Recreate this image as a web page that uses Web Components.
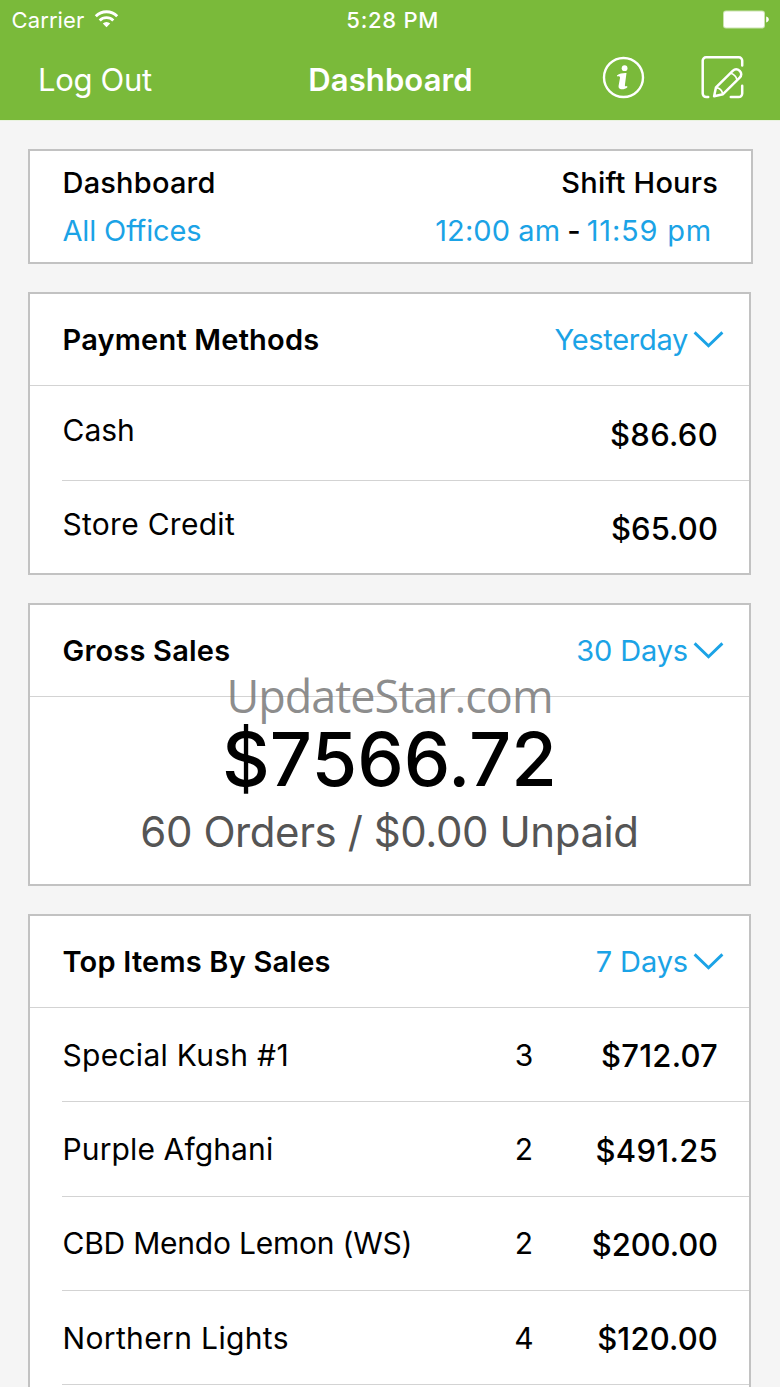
<!DOCTYPE html>
<html lang="en">
<head>
<meta charset="utf-8">
<title>Dashboard</title>
<style>
    html, body {
        margin: 0;
        height: 100%;
        overflow: hidden;
    }
    body {
        --green: #7aba3a;
        --blue: #1ba3e6;
        --border: #c2c2c2;
        --line: #d3d3d3;
        background: #f5f5f5;
        color: #000;
        font-family: Inter, "Liberation Sans", sans-serif;
    }
</style>
</head>
<body>
<dashboard-app></dashboard-app>

<script>
class StatusBar extends HTMLElement {
    constructor() {
        super();
        this.attachShadow({ mode: 'open' }).innerHTML = `
            <style>
                :host {
                    display: grid;
                    grid-template-columns: 1fr auto 1fr;
                    align-items: center;
                    height: 40px;
                    padding: 0 11px 0 11.5px;
                    font-size: 22px;
                    line-height: 40px;
                }
                .carrier { display: flex; align-items: center; gap: 9.5px; letter-spacing: 0.11px; }
                .time { font-weight: 500; letter-spacing: 0.72px; padding-left: 5px; }
                .battery { justify-self: end; margin-top: -2px; }
                svg { display: block; }
                .wifi { margin-top: -3px; }
            </style>
            <div class="carrier">
                <span>Carrier</span>
                <svg class="wifi" width="25" height="19" viewBox="0 0 25 19" fill="none" stroke="#fff" stroke-width="2.9">
                    <path d="M1.8 7.2a15.2 15.2 0 0 1 21.4 0"/>
                    <path d="M5.7 11.4a9.6 9.6 0 0 1 13.6 0"/>
                    <path d="M12.5 18.2l-3.7-3.7a5.3 5.3 0 0 1 7.4 0z" fill="#fff" stroke="none"/>
                </svg>
            </div>
            <span class="time">5:28 PM</span>
            <svg class="battery" width="46" height="19" viewBox="0 0 46 19">
                <rect x="0" y="0.5" width="42" height="18" rx="3" fill="#fff" fill-opacity="0.6"/>
                <rect x="1" y="1.5" width="40" height="16" rx="2" fill="#fff"/>
                <path d="M43.2 6.6c1.6.3 2.6 1.5 2.6 2.9s-1 2.6-2.6 2.9z" fill="#fff"/>
            </svg>
        `;
    }
}

class NavBar extends HTMLElement {
    constructor() {
        super();
        this.attachShadow({ mode: 'open' }).innerHTML = `
            <style>
                :host {
                    display: grid;
                    grid-template-columns: 1fr auto 1fr;
                    align-items: center;
                    height: 80px;
                    padding: 0 34.5px 0 38px;
                    box-sizing: border-box;
                    font-size: 31px;
                    line-height: 78px;
                }
                .back { letter-spacing: -0.31px; }
                .title { font-weight: 600; letter-spacing: 0.11px; padding-right: 2.5px; }
                .actions { display: flex; justify-content: flex-end; gap: 54.5px; margin-top: -5px; }
                svg { display: block; }
            </style>
            <span class="back">Log Out</span>
            <span class="title">Dashboard</span>
            <div class="actions">
                <svg width="43" height="43" viewBox="0 0 43 43">
                    <circle cx="21.5" cy="21.5" r="19.5" fill="none" stroke="#fff" stroke-width="2.4"/>
                    <circle cx="22.6" cy="12.2" r="2.9" fill="#fff"/>
                    <path d="M14.9 19.5c2.7-1.8 6-2.6 9.6-2.4l-1.6 12c-.2 1.3.7 1.5 2.2.8l.3 1.3c-1.9 1.7-4.3 2.4-6.4 2-1.9-.4-2.7-1.6-2.4-3.4l1.4-7.8c.2-1.4-.9-1.9-2.8-1.5z" fill="#fff"/>
                </svg>
                <svg width="46" height="43" viewBox="0 0 46 43" fill="none" stroke="#fff" stroke-width="2.5" stroke-linecap="round" stroke-linejoin="round">
                    <path d="M8.2 41.1H6.3a3.6 3.6 0 0 1-3.6-3.6V4.6a3.3 3.3 0 0 1 3.3-3.3h32.9a3.3 3.3 0 0 1 3.3 3.3v4.8"/>
                    <path d="M42.2 29.8v7.7a3.6 3.6 0 0 1-3.6 3.6h-7.8"/>
                    <path d="M14.1 40.2l1.9-8.9 16.7-16.4c2.1-2 4.9-2 7 0s2 4.9 0 6.8L23 38.2z"/>
                    <path d="M17.3 31.8c2.5.6 4.3 2.3 5.1 5M30.7 17.3c3.2.9 5.2 2.9 6.2 6.1" stroke-width="1.7"/>
                </svg>
            </div>
        `;
    }
}

class DashCard extends HTMLElement {
    constructor() {
        super();
        this.attachShadow({ mode: 'open' }).innerHTML = `
            <style>
                :host {
                    display: block;
                    box-sizing: border-box;
                    width: 723px;
                    background: #fff;
                    border: 2px solid var(--border);
                }
            </style>
            <slot></slot>
        `;
    }
}

class CardHead extends HTMLElement {
    constructor() {
        super();
        this.attachShadow({ mode: 'open' }).innerHTML = `
            <style>
                :host {
                    display: flex;
                    align-items: center;
                    justify-content: space-between;
                    box-sizing: border-box;
                    height: 92.2px;
                    padding: 0 25px 0 32.5px;
                    border-bottom: 1px solid var(--line);
                    font-size: 29px;
                }
                .title { font-weight: 600; letter-spacing: 0.2px; }
                .period {
                    display: flex;
                    align-items: center;
                    gap: 5px;
                    color: var(--blue);
                }
                svg { display: block; }
            </style>
            <span class="title"><slot></slot></span>
            <div class="period">
                <slot name="period"></slot>
                <svg width="31" height="18" viewBox="0 0 31 18" fill="none" stroke="currentColor" stroke-width="2.9">
                    <path d="M1.6 1.4L15.5 14.8L29.4 1.4"/>
                </svg>
            </div>
        `;
    }
}

class ListRow extends HTMLElement {
    constructor() {
        super();
        this.attachShadow({ mode: 'open' }).innerHTML = `
            <style>
                :host {
                    display: grid;
                    grid-template-columns: 1fr 40px 174px;
                    align-items: center;
                    box-sizing: border-box;
                    height: 94.3px;
                    margin-left: 32px;
                    padding-right: 31px;
                    border-bottom: 1px solid var(--line);
                    font-size: 30px;
                }
                :host([last]) { border-bottom: none; }
                .name { padding-left: 0.5px; white-space: nowrap; }
                :host([raised]) .name { padding-bottom: 6px; }
                .qty { text-align: center; }
                .amount { padding-top: 2px; text-align: right; font-size: 31px; font-weight: 500; }
            </style>
            <span class="name"><slot></slot></span>
            <span class="qty"><slot name="qty"></slot></span>
            <span class="amount"><slot name="amount"></slot></span>
        `;
    }
}

class ShiftInfo extends HTMLElement {
    constructor() {
        super();
        this.attachShadow({ mode: 'open' }).innerHTML = `
            <style>
                :host {
                    display: flex;
                    justify-content: space-between;
                    box-sizing: border-box;
                    height: 111px;
                    padding: 8px 33px 0 32.5px;
                    font-size: 29px;
                    line-height: 48px;
                }
                .label { font-weight: 500; letter-spacing: 0.2px; }
                .right { text-align: right; }
                .link { color: var(--blue); }
                .hours { display: flex; gap: 7.5px; padding-right: 6px; }
                .dash { width: 12px; margin-left: -0.5px; font-weight: 500; }
            </style>
            <div>
                <div class="label">Dashboard</div>
                <div class="link" style="letter-spacing: -0.15px">All Offices</div>
            </div>
            <div class="right">
                <div class="label">Shift Hours</div>
                <div class="hours">
                    <span class="link" style="letter-spacing: 0.09px">12:00 am</span>
                    <span class="dash">-</span>
                    <span class="link" style="letter-spacing: 0.8px">11:59 pm</span>
                </div>
            </div>
        `;
    }
}

class SalesTotal extends HTMLElement {
    constructor() {
        super();
        this.attachShadow({ mode: 'open' }).innerHTML = `
            <style>
                :host {
                    display: block;
                    box-sizing: border-box;
                    height: 186.8px;
                    padding-top: 25px;
                    text-align: center;
                }
                .total { font-size: 74px; font-weight: 500; line-height: 74px; }
                .orders { color: #555; font-size: 42px; line-height: 72px; letter-spacing: -0.42px; }
            </style>
            <div class="total"><slot name="total"></slot></div>
            <div class="orders"><slot></slot></div>
        `;
    }
}

class WaterMark extends HTMLElement {
    constructor() {
        super();
        this.attachShadow({ mode: 'open' }).innerHTML = `
            <style>
                :host {
                    position: absolute;
                    top: 665px;
                    left: 0;
                    width: 779px;
                    text-align: center;
                    color: rgba(110, 110, 110, 0.78);
                    font: 400 45px/61px "Open Sans", "Noto Sans", sans-serif;
                    letter-spacing: -1.02px;
                }
            </style>
            <slot></slot>
        `;
    }
}

class DashboardApp extends HTMLElement {
    constructor() {
        super();
        this.attachShadow({ mode: 'open' }).innerHTML = `
            <style>
                :host {
                    display: flex;
                    flex-direction: column;
                    height: 100vh;
                    overflow: hidden;
                }
                header {
                    background: var(--green);
                    border-bottom: 1px solid #e9f3df;
                    color: #fff;
                }
                main {
                    display: flex;
                    flex: 1;
                    flex-direction: column;
                    gap: 28px;
                    min-height: 0;
                    padding: 28px 28px 0;
                }
                dash-card { flex: none; }
                .wide { width: 725px; }
                /* the last card runs on below the fold */
                .rest { flex: 1; min-height: 0; border-bottom: none; }
            </style>
            <header>
                <status-bar></status-bar>
                <nav-bar></nav-bar>
            </header>
            <main>
                <dash-card class="wide"><shift-info></shift-info></dash-card>
                <dash-card>
                    <card-head>Payment Methods<span slot="period" style="letter-spacing: -0.3px">Yesterday</span></card-head>
                    <list-row raised style="height: 94.9px">Cash<span slot="amount" style="letter-spacing: 0.3px">$86.60</span></list-row>
                    <list-row raised last style="height: 91.9px"><span style="letter-spacing: 0.28px">Store Credit</span><span slot="amount" style="letter-spacing: 0.1px">$65.00</span></list-row>
                </dash-card>
                <dash-card>
                    <card-head>Gross Sales<span slot="period" style="letter-spacing: -0.15px">30 Days</span></card-head>
                    <sales-total><span slot="total">$7566.72</span>60 Orders / $0.00 Unpaid</sales-total>
                </dash-card>
                <dash-card class="rest">
                    <card-head>Top Items By Sales<span slot="period" style="letter-spacing: -0.13px">7 Days</span></card-head>
                    <list-row><span style="letter-spacing: 0.28px">Special Kush #1</span><span slot="qty">3</span><span slot="amount" style="letter-spacing: 0.22px">$712.07</span></list-row>
                    <list-row><span style="letter-spacing: 0.12px">Purple Afghani</span><span slot="qty">2</span><span slot="amount" style="letter-spacing: 0.29px">$491.25</span></list-row>
                    <list-row><span style="letter-spacing: -0.23px">CBD Mendo Lemon (WS)</span><span slot="qty">2</span><span slot="amount" style="letter-spacing: -0.1px">$200.00</span></list-row>
                    <list-row><span style="letter-spacing: 0.36px">Northern Lights</span><span slot="qty">4</span><span slot="amount" style="letter-spacing: 0.15px">$120.00</span></list-row>
                </dash-card>
            </main>
            <water-mark>UpdateStar.com</water-mark>
        `;
    }
}

customElements.define('status-bar', StatusBar);
customElements.define('nav-bar', NavBar);
customElements.define('dash-card', DashCard);
customElements.define('card-head', CardHead);
customElements.define('list-row', ListRow);
customElements.define('shift-info', ShiftInfo);
customElements.define('sales-total', SalesTotal);
customElements.define('water-mark', WaterMark);
customElements.define('dashboard-app', DashboardApp);
</script>
</body>
</html>
